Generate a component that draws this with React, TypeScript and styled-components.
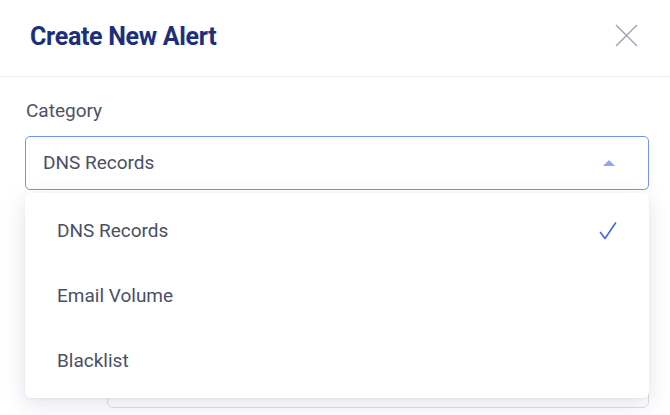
import React from "react";
import styled, { createGlobalStyle } from "styled-components";

const Global = createGlobalStyle`
  html, body { margin: 0; padding: 0; background: #ffffff; }
  body { font-family: Roboto, "Liberation Sans", Arial, sans-serif; -webkit-font-smoothing: antialiased; }
  * { box-sizing: border-box; }
`;

const Modal = styled.div`
  width: 670px;
  height: 415px;
  overflow: hidden;
  background: #ffffff;
`;

const Header = styled.div`
  height: 77px;
  padding: 0 30px 3px 30px;
  display: flex;
  align-items: center;
  justify-content: space-between;
  border-bottom: 1px solid #f1f1f4;
`;

const Title = styled.h1`
  margin: 0;
  font-size: 25px;
  font-weight: 700;
  letter-spacing: -0.3px;
  color: #1b2f7d;
`;

const CloseButton = styled.button`
  border: 0;
  background: transparent;
  padding: 0;
  width: 24px;
  height: 24px;
  margin-right: 2px;
  margin-bottom: 2px;
  display: flex;
  align-items: center;
  justify-content: center;
  cursor: pointer;
`;

const Body = styled.div`
  padding: 23px 21px 0 25px;
`;

const Label = styled.div`
  font-size: 19px;
  line-height: 22px;
  color: #4d5268;
  margin-left: 1px;
`;

const SelectWrap = styled.div`
  position: relative;
  margin-top: 14px;
  z-index: 2;
`;

const SelectBox = styled.div`
  height: 54px;
  border: 1px solid #7393f4;
  border-radius: 5px;
  background: #ffffff;
  display: flex;
  align-items: center;
  justify-content: space-between;
  padding: 0 33px 2px 17px;
  font-size: 19px;
  color: #4a4f65;
`;

const Caret = styled.span`
  width: 0;
  height: 0;
  border-left: 6px solid transparent;
  border-right: 6px solid transparent;
  border-bottom: 6px solid #8fa6f6;
  margin-top: 2px;
`;

const Menu = styled.ul`
  position: absolute;
  left: 0;
  right: 0;
  top: calc(100% + 3px);
  margin: 0;
  padding: 5px 0;
  list-style: none;
  background: #ffffff;
  border-radius: 6px;
  box-shadow: 0 6px 22px rgba(40, 48, 100, 0.13), 0 1px 3px rgba(40, 48, 100, 0.06);
`;

const Item = styled.li<{ $selected?: boolean }>`
  height: 65px;
  display: flex;
  align-items: center;
  justify-content: space-between;
  padding: 0 32px;
  font-size: 19px;
  color: #4a4f65;
`;

const NextRow = styled.div`
  display: flex;
  margin-top: 164px;
`;

const Spacer = styled.div`
  width: 82px;
  flex: none;
`;

const Input = styled.div`
  flex: 1;
  height: 54px;
  border: 1px solid #dcdee8;
  border-radius: 6px;
`;

const CloseIcon = () => (
  <svg width="23" height="23" viewBox="0 0 23 23" fill="none">
    <path d="M1 1 L22 22 M22 1 L1 22" stroke="#a4a5b0" strokeWidth="1.5" />
  </svg>
);

const Check = () => (
  <svg width="18" height="18" viewBox="0 0 18 18" fill="none">
    <path d="M1.5 10.5 L6 16.5 L16.5 1" stroke="#3e68f0" strokeWidth="1.6" strokeLinecap="round" strokeLinejoin="round" />
  </svg>
);

const options = ["DNS Records", "Email Volume", "Blacklist"];

export default function App() {
  const selected = "DNS Records";
  return (
    <>
      <Global />
      <Modal>
        <Header>
          <Title>Create New Alert</Title>
          <CloseButton aria-label="Close">
            <CloseIcon />
          </CloseButton>
        </Header>
        <Body>
          <Label>Category</Label>
          <SelectWrap>
            <SelectBox>
              <span>{selected}</span>
              <Caret />
            </SelectBox>
            <Menu>
              {options.map((o) => (
                <Item key={o} $selected={o === selected}>
                  <span>{o}</span>
                  {o === selected && <Check />}
                </Item>
              ))}
            </Menu>
          </SelectWrap>
          <NextRow>
            <Spacer />
            <Input />
          </NextRow>
        </Body>
      </Modal>
    </>
  );
}
